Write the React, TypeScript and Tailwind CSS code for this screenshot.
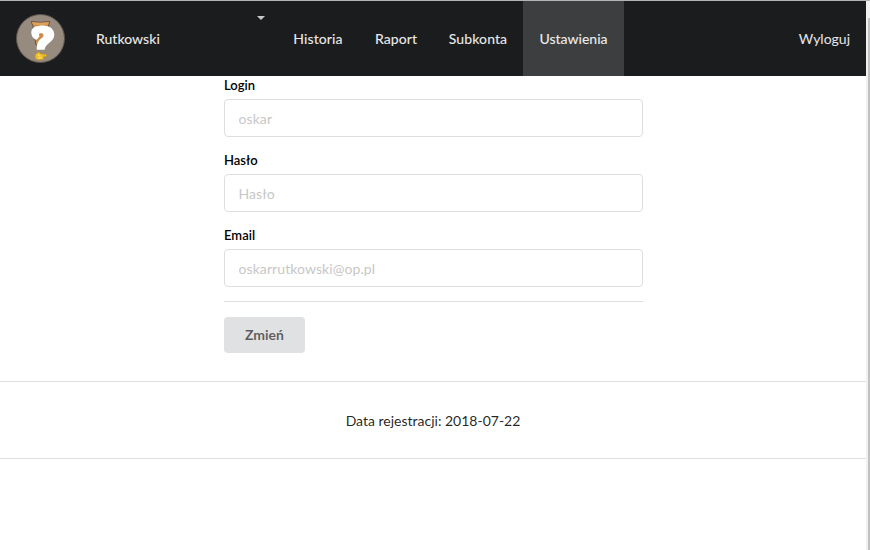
const links = [
  { label: 'Historia', width: 'w-[82px]' },
  { label: 'Raport', width: 'w-[74px]' },
  { label: 'Subkonta', width: 'w-[90px]' },
];

const fields = [
  { id: 'login', label: 'Login', type: 'text', placeholder: 'oskar' },
  { id: 'password', label: 'Hasło', type: 'password', placeholder: 'Hasło' },
  { id: 'email', label: 'Email', type: 'email', placeholder: 'oskarrutkowski@op.pl' },
];

function Avatar() {
  return (
    <svg className="ml-4 mt-[13px] size-[49px] shrink-0" viewBox="0 0 49 49" aria-hidden="true">
      <circle cx="24.5" cy="24.5" r="24" fill="#978a7e" stroke="#5b534c" strokeWidth="1" />
      <path d="M15.3 7.5Q24 9 33.7 7.5L32.3 13L31 18L28 31H20L17.5 17L17 12.5Z" fill="#c98d4b" stroke="#5a4636" strokeWidth="0.8" />
      <path d="M16 8Q24 9.6 33 8L32 10.5Q24 12 17 10.5Z" fill="#dc9f5c" />
      <path d="M15.3 18.5C15.3 13.5 20 11.6 27 11.6C34 11.6 38.3 15.5 38.3 20.8C38.3 28 29.2 29.5 28.6 35.7H20.8C20.6 28.5 22.5 26.5 25.8 24C28.5 22 28 19.2 25 19.2C22.5 19.2 22.6 21.2 23.6 22.2L20.6 25.8C17.5 25 15.3 22 15.3 18.5Z" fill="#fff" />
      <path d="M19.2 40.5L22.5 38L25 39.8L30.4 40.5L30.8 42.2L27.5 43L28 45.2L22 46L19 44Z" fill="#edbd28" stroke="#c08e20" strokeWidth="0.6" />
      <path d="M21.5 40.5L24.5 42.3M22 44.2L26 43.8" stroke="#ffe36b" strokeWidth="1.2" />
    </svg>
  );
}

export default function App() {
  return (
    <div className="flex h-[550px] w-[870px] overflow-hidden bg-white font-['Lato',sans-serif] text-sm text-black/87">
      <div className="w-[866px]">
        <nav className="flex h-[76px] border-t border-[#b4b4b6] bg-[#1b1c1d] font-medium text-white/90">
          <Avatar />
          <span className="ml-[31px] flex w-[161px] items-center pt-px">Rutkowski</span>
          <svg className="mt-[15px] h-1 w-2 shrink-0" viewBox="0 0 8 4" aria-hidden="true">
            <path d="M0 0H8L4 4Z" fill="#c9c9c9" />
          </svg>
          <div className="ml-3 flex">
            {links.map((link) => (
              <a key={link.label} href="#" className={`flex items-center justify-center pt-px tracking-[0.08px] ${link.width}`}>{link.label}</a>
            ))}
            <a href="#" className="flex w-[101px] items-center justify-center bg-[#3d3e3f] pt-px">Ustawienia</a>
          </div>
          <a href="#" className="ml-auto flex items-center px-4 pt-px font-normal">Wyloguj</a>
        </nav>

        <form className="ml-56 w-[419px]">
          {fields.map((f) => (
            <div key={f.id} className="h-[75px]">
              <label htmlFor={f.id} className="block h-[23px] text-[13px] leading-[18px] font-semibold text-black">{f.label}</label>
              <input
                id={f.id}
                type={f.type}
                placeholder={f.placeholder}
                className="block h-[38px] w-full rounded border border-[#dededf] px-[13.5px] tracking-[0.08px] placeholder:text-[#c7c7c7]"
              />
            </div>
          ))}
          <hr className="border-[#dededf]" />
          <button type="button" className="mt-[15px] block h-9 w-[81px] rounded bg-[#e0e1e2] text-sm font-bold text-black/60">Zmień</button>
        </form>

        <div className="mt-7 flex h-[78px] items-center justify-center border-y border-[#dededf] pt-0.5">
          Data rejestracji: 2018-07-22
        </div>
      </div>
      <div className="w-1 border-t border-[#b4b4b6] bg-[#f1f1f1] pt-[17px] pl-0.5">
        <div className="h-full bg-[#c1c1c1]" />
      </div>
    </div>
  );
}
